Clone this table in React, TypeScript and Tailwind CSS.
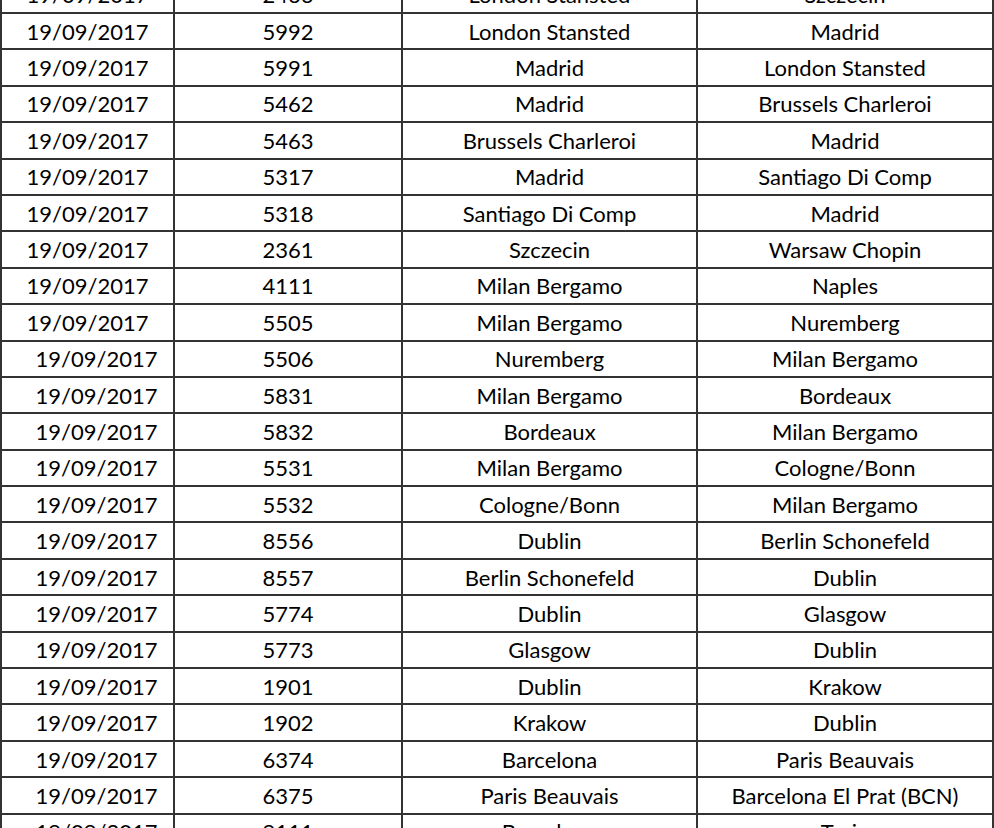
const rows: [string, string, string, boolean?][] = [
  ['2466', 'London Stansted', 'Szczecin'],
  ['5992', 'London Stansted', 'Madrid'],
  ['5991', 'Madrid', 'London Stansted'],
  ['5462', 'Madrid', 'Brussels Charleroi'],
  ['5463', 'Brussels Charleroi', 'Madrid'],
  ['5317', 'Madrid', 'Santiago Di Comp'],
  ['5318', 'Santiago Di Comp', 'Madrid'],
  ['2361', 'Szczecin', 'Warsaw Chopin'],
  ['4111', 'Milan Bergamo', 'Naples'],
  ['5505', 'Milan Bergamo', 'Nuremberg'],
  ['5506', 'Nuremberg', 'Milan Bergamo', true],
  ['5831', 'Milan Bergamo', 'Bordeaux', true],
  ['5832', 'Bordeaux', 'Milan Bergamo', true],
  ['5531', 'Milan Bergamo', 'Cologne/Bonn', true],
  ['5532', 'Cologne/Bonn', 'Milan Bergamo', true],
  ['8556', 'Dublin', 'Berlin Schonefeld', true],
  ['8557', 'Berlin Schonefeld', 'Dublin', true],
  ['5774', 'Dublin', 'Glasgow', true],
  ['5773', 'Glasgow', 'Dublin', true],
  ['1901', 'Dublin', 'Krakow', true],
  ['1902', 'Krakow', 'Dublin', true],
  ['6374', 'Barcelona', 'Paris Beauvais', true],
  ['6375', 'Paris Beauvais', 'Barcelona El Prat (BCN)', true],
  ['9111', 'Barcelona', 'Turin', true],
];

export default function App() {
  return (
    <div className="h-screen overflow-hidden bg-white">
      <div
        className="mt-[-22.4px] w-[994px] border-l-2 border-[#333] text-[22px] text-black"
        style={{ fontFamily: 'Lato, "Open Sans", sans-serif' }}
      >
        {rows.map(([flight, from, to, shifted], i) => (
          <div
            key={i}
            className="grid h-[36.4px] grid-cols-[173px_228px_295px_296px] border-b-2 border-[#333]"
          >
            <div
              className={`flex items-center justify-center border-r-2 border-[#333] ${shifted ? 'pl-[18px]' : ''}`}
            >
              19/09/2017
            </div>
            <div className="flex items-center justify-center border-r-2 border-[#333]">
              {flight}
            </div>
            <div className="flex items-center justify-center border-r-2 border-[#333]">
              {from}
            </div>
            <div className="flex items-center justify-center border-r-2 border-[#333]">
              {to}
            </div>
          </div>
        ))}
      </div>
    </div>
  );
}
